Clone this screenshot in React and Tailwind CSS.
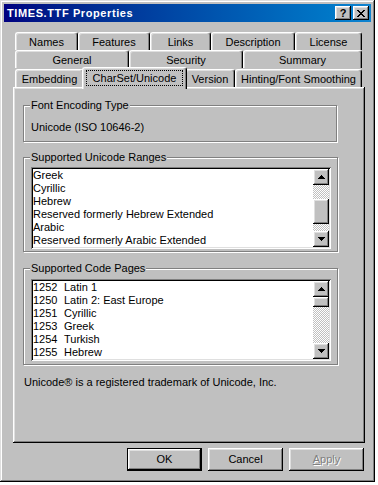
import React from "react";

const raised =
  "shadow-[inset_-1px_-1px_#000,inset_1px_1px_#fff,inset_-2px_-2px_#808080,inset_2px_2px_#dfdfdf]";
const checker =
  "bg-[repeating-conic-gradient(#c0c0c0_0%_25%,#fff_0%_50%)] bg-[length:2px_2px]";

const tabRows = [
  [
    { label: "Names", w: "w-[63px]" },
    { label: "Features", w: "w-[72px]" },
    { label: "Links", w: "w-[61px]" },
    { label: "Description", w: "w-[84px]" },
    { label: "License", w: "w-[67px]" },
  ],
  [
    { label: "General", w: "w-[114px]" },
    { label: "Security", w: "w-[114px]" },
    { label: "Summary", w: "w-[119px]" },
  ],
];

const ranges = [
  "Greek",
  "Cyrillic",
  "Hebrew",
  "Reserved formerly Hebrew Extended",
  "Arabic",
  "Reserved formerly Arabic Extended",
];

const codePages = [
  ["1252", "Latin 1"],
  ["1250", "Latin 2: East Europe"],
  ["1251", "Cyrillic"],
  ["1253", "Greek"],
  ["1254", "Turkish"],
  ["1255", "Hebrew"],
];

function Tab({ label, w, className = "" }) {
  return (
    <div
      className={`${w} flex items-center justify-center pt-[1px] bg-[#c0c0c0] border-l border-t border-white border-r border-r-black rounded-t-[3px] shadow-[inset_-1px_0_#808080,inset_1px_1px_#dfdfdf] ${className}`}
    >
      {label}
    </div>
  );
}

function Arrow({ down }) {
  return (
    <svg width="7" height="4" viewBox="0 0 7 4" shapeRendering="crispEdges" className={down ? "rotate-180" : ""}>
      <path d="M3 0h1v1h-1z M2 1h3v1h-3z M1 2h5v1h-5z M0 3h7v1h-7z" fill="#000" />
    </svg>
  );
}

function ScrollButton({ down }) {
  return (
    <div className={`w-[16px] h-[16px] bg-[#c0c0c0] flex items-center justify-center ${raised}`}>
      <Arrow down={down} />
    </div>
  );
}

function ListBox({ children, before, thumb, after }) {
  return (
    <div className="w-[300px] h-[82px] bg-white p-[2px] flex shadow-[inset_1px_1px_#808080,inset_-1px_-1px_#fff,inset_2px_2px_#000,inset_-2px_-2px_#dfdfdf]">
      <div className="flex-1 overflow-hidden">{children}</div>
      <div className="w-[16px] flex flex-col">
        <ScrollButton />
        <div className={`${before} ${checker}`} />
        <div className={`${thumb} bg-[#c0c0c0] ${raised}`} />
        <div className={`${after} ${checker}`} />
        <ScrollButton down />
      </div>
    </div>
  );
}

function Group({ title, children, className = "" }) {
  return (
    <fieldset
      className={`w-[314px] border border-[#808080] px-[6px] shadow-[1px_1px_0_#fff,inset_1px_1px_0_#fff] ${className}`}
    >
      <legend className="px-[1px] leading-[13px] bg-[#c0c0c0]">{title}</legend>
      {children}
    </fieldset>
  );
}

function Button({ children, isDefault, disabled }) {
  return (
    <div
      className={`w-[75px] h-[23px] flex items-center justify-center bg-[#c0c0c0] ${
        isDefault ? "border border-black" : ""
      } ${raised} ${disabled ? "text-[#808080] [text-shadow:1px_1px_0_#fff]" : ""}`}
    >
      {children}
    </div>
  );
}

export default function App() {
  return (
    <div className="w-[378px] h-[485px] bg-white font-['Liberation_Sans',Arial,sans-serif] text-[11px] leading-[13px] text-black">
      <div className="w-[375px] h-[482px] bg-[#c0c0c0] p-[4px] flex flex-col shadow-[inset_-1px_-1px_#000,inset_1px_1px_#dfdfdf,inset_-2px_-2px_#808080,inset_2px_2px_#fff]">
        {/* Title bar */}
        <div className="h-[18px] flex items-center bg-gradient-to-r from-[#000080] to-[#1084d0] pl-[3px] pr-[2px]">
          <span className="flex-1 text-white font-bold tracking-[0.6px]">TIMES.TTF Properties</span>
          <div className="flex gap-[2px]">
            <div className={`w-[16px] h-[14px] bg-[#c0c0c0] flex items-center justify-center font-bold text-[11px] leading-none ${raised}`}>
              ?
            </div>
            <div className={`w-[16px] h-[14px] bg-[#c0c0c0] flex items-center justify-center ${raised}`}>
              <svg width="8" height="7" viewBox="0 0 8 7" shapeRendering="crispEdges">
                <path
                  d="M0 0h2v1h-2z M6 0h2v1h-2z M1 1h2v1h-2z M5 1h2v1h-2z M2 2h4v1h-4z M3 3h2v1h-2z M2 4h4v1h-4z M1 5h2v1h-2z M5 5h2v1h-2z M0 6h2v1h-2z M6 6h2v1h-2z"
                  fill="#000"
                />
              </svg>
            </div>
          </div>
        </div>

        {/* Body */}
        <div className="flex flex-col pl-[9px] pt-[10px]">
          <div className="ml-[2px] w-[347px] flex flex-col">
            {tabRows.map((row, i) => (
              <div key={i} className="flex h-[18px]">
                {row.map((t) => (
                  <Tab key={t.label} label={t.label} w={t.w} />
                ))}
              </div>
            ))}
            <div className="flex h-[19px] items-end">
              <Tab label="Embedding" w="w-[69px]" className="h-[18px]" />
              <div className="relative z-10 w-[105px] h-[22px] -mx-[2px] -mb-[2px] flex flex-col bg-[#c0c0c0] border-l border-t border-white border-r border-r-black rounded-t-[3px] shadow-[inset_-1px_0_#808080,inset_1px_1px_#dfdfdf]">
                <div className="mx-[3px] mt-[2px] mb-[3px] flex-1 flex items-center justify-center border border-dotted border-black">
                  CharSet/Unicode
                </div>
              </div>
              <Tab label="Version" w="w-[50px]" className="h-[18px]" />
              <Tab label="Hinting/Font Smoothing" w="w-[127px]" className="h-[18px]" />
            </div>
          </div>

          {/* Panel */}
          <div className="w-[352px] h-[356px] flex flex-col pl-[10px] pt-[12px] shadow-[inset_-1px_-1px_#000,inset_1px_1px_#fff,inset_-2px_-2px_#808080,inset_2px_2px_#dfdfdf]">
            <Group title="Font Encoding Type" className="pb-[7px]">
              <div className="pt-[9px] pl-[1px]">Unicode (ISO 10646-2)</div>
            </Group>

            <Group title="Supported Unicode Ranges" className="mt-[9px] pb-[2px]">
              <div className="pt-[3px] pl-[1px]">
                <ListBox before="h-[14px]" thumb="h-[25px]" after="h-[7px]">
                  {ranges.map((r) => (
                    <div key={r} className="h-[13px] whitespace-nowrap">
                      {r}
                    </div>
                  ))}
                </ListBox>
              </div>
            </Group>

            <Group title="Supported Code Pages" className="mt-[10px] pb-[3px]">
              <div className="pt-[4px] pl-[1px]">
                <ListBox before="h-0" thumb="h-[10px]" after="h-[36px]">
                  {codePages.map(([n, name]) => (
                    <div key={n} className="h-[13px] whitespace-nowrap flex">
                      <span className="w-[31px]">{n}</span>
                      <span>{name}</span>
                    </div>
                  ))}
                </ListBox>
              </div>
            </Group>

            <div className="mt-[11px] pl-[1px]">Unicode® is a registered trademark of Unicode, Inc.</div>
          </div>

          {/* Buttons */}
          <div className="w-[352px] mt-[5px] flex justify-end gap-[6px] pr-[1px]">
            <Button isDefault>OK</Button>
            <Button>Cancel</Button>
            <Button disabled>
              <span>
                <span className="underline">A</span>pply
              </span>
            </Button>
          </div>
        </div>
      </div>
    </div>
  );
}
